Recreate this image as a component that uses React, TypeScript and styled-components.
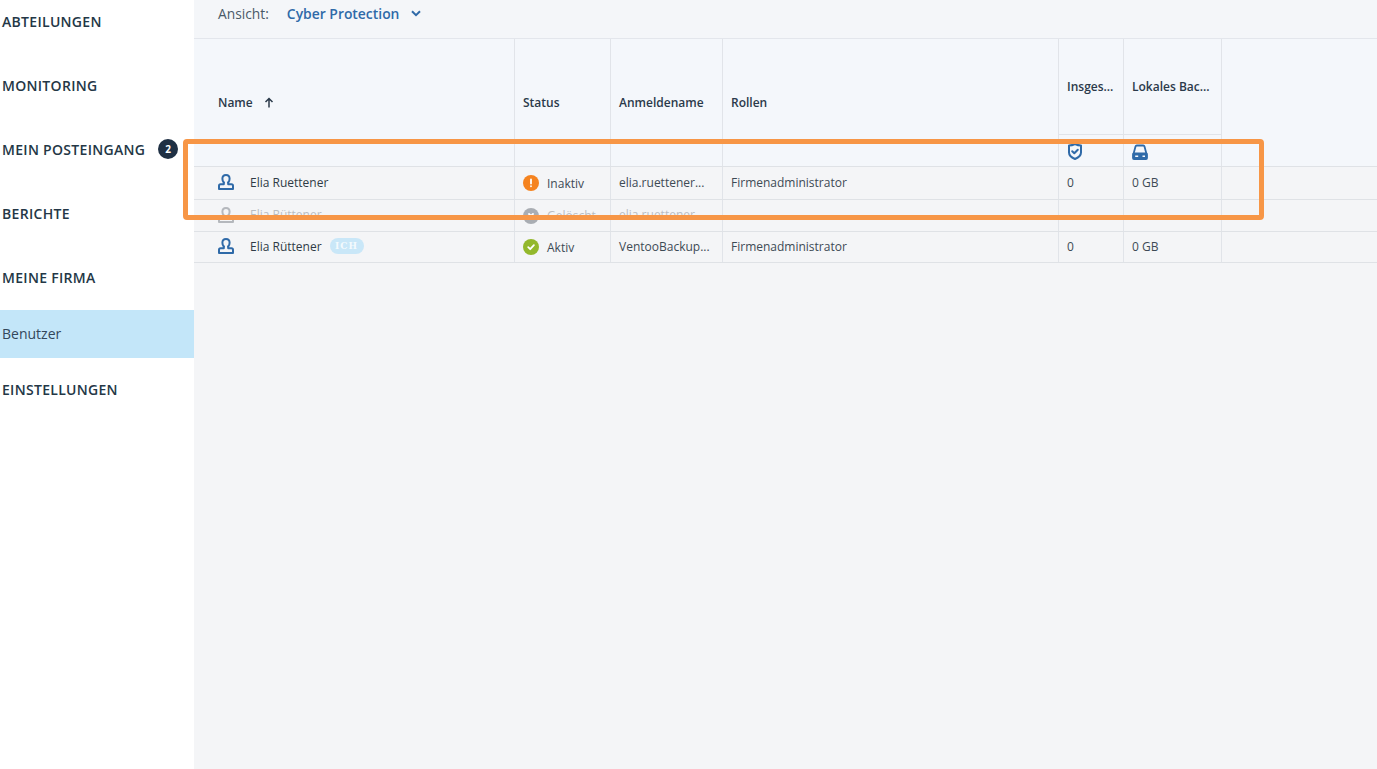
import React from "react";
import styled, { createGlobalStyle } from "styled-components";

const Global = createGlobalStyle`
  html, body { margin: 0; padding: 0; height: 100%; overflow: hidden; background: #f4f5f7; }
  body { font-family: "Open Sans", "Liberation Sans", sans-serif; color: #2b3a4a; }
  #root { height: 100vh; }
`;

const Page = styled.div`
  position: relative;
  display: flex;
  height: 769px;
  overflow: hidden;
`;

const Sidebar = styled.nav`
  width: 194px;
  flex: none;
  background: #fff;
  display: flex;
  flex-direction: column;
  margin-top: -10px;
  height: 779px;
`;

const NavItem = styled.div`
  height: 64px;
  flex: none;
  box-sizing: border-box;
  display: flex;
  align-items: center;
  padding: 0 0 2px 2px;
  font-size: 14px;
  font-weight: 600;
  letter-spacing: 0.3px;
  color: #243746;
`;

const NavSubItem = styled.div`
  height: 48px;
  flex: none;
  box-sizing: border-box;
  display: flex;
  align-items: center;
  padding: 0 0 2px 2px;
  font-size: 14px;
  color: #33475b;
  background: #c3e6f9;
`;

const Count = styled.span`
  width: 20px;
  height: 20px;
  border-radius: 50%;
  background: #1f3044;
  color: #fff;
  font-size: 10px;
  font-weight: 700;
  letter-spacing: 0;
  display: flex;
  align-items: center;
  justify-content: center;
  margin-left: 13px;
`;

const Main = styled.main`
  flex: 1;
  min-width: 0;
  display: flex;
  flex-direction: column;
`;

const TopBar = styled.div`
  height: 34px;
  flex: none;
  box-sizing: content-box;
  border-bottom: 1px solid #e3e6ec;
  background: #f4f6f9;
  display: flex;
  align-items: flex-start;
  padding: 4px 0 0 24px;
  line-height: 19px;
`;

const ViewLabel = styled.span`
  color: #4a5a68;
  font-size: 13.8px;
`;

const ViewValue = styled.span`
  color: #2f6aa8;
  font-weight: 600;
  font-size: 13.9px;
  margin-left: 18px;
`;

const Chevron = styled.svg`
  width: 10px;
  height: 7px;
  margin: 6px 0 0 12px;
`;

const Row = styled.div<{ $height: number; $bg?: string }>`
  display: grid;
  grid-template-columns: 321px 96px 112px 336px 65px 98px 1fr;
  height: ${(p) => p.$height}px;
  box-sizing: border-box;
  background: ${(p) => p.$bg || "#f4f5f7"};
  border-bottom: 1px solid #dfe2e6;
`;

const Cell = styled.div<{ $noBorder?: boolean; $dim?: boolean }>`
  box-sizing: border-box;
  border-right: ${(p) => (p.$noBorder ? "none" : "1px solid #e1e4e9")};
  padding-left: 8px;
  padding-bottom: 2px;
  display: flex;
  align-items: center;
  font-size: 12px;
  min-width: 0;
  white-space: nowrap;
  color: ${(p) => (p.$dim ? "#b9bdc2" : "#3d4a55")};
`;

const NameCell = styled(Cell)`
  padding-left: 24px;
  color: ${(p) => (p.$dim ? "#b9bdc2" : "#2f3b46")};
`;

const HeadName = styled(Cell)`
  padding-left: 24px;
  padding-bottom: 1px;
  font-weight: 600;
  color: #2b3a4a;
`;

const HeadCell = styled(Cell)`
  padding-bottom: 1px;
  font-weight: 600;
  color: #2b3a4a;
`;

const StackCell = styled.div`
  box-sizing: border-box;
  border-right: 1px solid #e1e4e9;
  display: grid;
  grid-template-rows: 96px 1fr;
  min-width: 0;
`;

const StackTitle = styled.div`
  box-sizing: border-box;
  border-bottom: 1px solid #e1e4e9;
  padding: 40px 0 0 8px;
  font-size: 12px;
  line-height: 16px;
  font-weight: 600;
  color: #2b3a4a;
  white-space: nowrap;
`;

const StackIcon = styled.div`
  padding: 8px 0 0 8px;
`;

const SortArrow = styled.svg`
  width: 10px;
  height: 11px;
  margin-left: 11px;
`;

const UserSvg = styled.svg`
  width: 16px;
  height: 16px;
  flex: none;
  margin-right: 16px;
`;

const StatusDot = styled.span<{ $color: string }>`
  width: 16px;
  height: 16px;
  border-radius: 50%;
  background: ${(p) => p.$color};
  display: flex;
  align-items: center;
  justify-content: center;
  flex: none;
  margin-right: 8px;
  color: #fff;
`;

const StatusWrap = styled.span`
  display: flex;
  align-items: center;
  position: relative;
  top: 1px;
`;

const MeBadge = styled.span`
  margin-left: 8px;
  height: 16px;
  width: 34px;
  border-radius: 8px;
  background: #c9e7f8;
  color: #f4fafd;
  font-family: "DejaVu Serif", serif;
  font-size: 9px;
  font-weight: 700;
  letter-spacing: 1.1px;
  display: flex;
  align-items: center;
  justify-content: center;
`;

const Highlight = styled.div`
  position: absolute;
  left: 183px;
  top: 139px;
  width: 1081px;
  height: 81px;
  box-sizing: border-box;
  border: 5px solid #f79646;
  border-radius: 4px;
  pointer-events: none;
`;

const UserIcon = ({ color }: { color: string }) => (
  <UserSvg viewBox="0 0 16 16" fill="none" stroke={color} strokeWidth="2" strokeLinejoin="round" strokeLinecap="round">
    <path d="M5.800 8.600C4.900 7.800 4.400 6.500 4.400 4.800 4.400 2.500 5.900 1 8 1s3.600 1.500 3.600 3.800c0 1.700-.5 3-1.400 3.800" />
    <path d="M5.800 8.600v1.600H2.500c-.9 0-1.500.6-1.500 1.500V15h14v-3.300c0-.9-.6-1.500-1.500-1.500h-3.300V8.600" />
  </UserSvg>
);

const people = [
  { name: "Elia Ruettener", status: "Inaktiv", color: "#f5831f", login: "elia.ruettener...", role: "Firmenadministrator", total: "0", local: "0 GB", glyph: "!" },
  { name: "Elia Rüttener", status: "Gelöscht", color: "#a9adb3", login: "elia.ruettener...", role: "", total: "", local: "", glyph: "x", dim: true, height: 32 },
  { name: "Elia Rüttener", status: "Aktiv", color: "#93b82c", login: "VentooBackup...", role: "Firmenadministrator", total: "0", local: "0 GB", glyph: "v", me: true, height: 31 },
];

const Glyph = ({ kind }: { kind: string }) => (
  <svg width="10" height="10" viewBox="0 0 10 10" fill="none" stroke="currentColor" strokeWidth="1.8" strokeLinecap="round" strokeLinejoin="round">
    {kind === "!" && <path d="M5 1.500v4M5 8.200v.1" />}
    {kind === "x" && <path d="M3 3l4 4M7 3L3 7" />}
    {kind === "v" && <path d="M2.200 5.200L4.200 7.200 7.900 3.200" />}
  </svg>
);

export default function App() {
  return (
    <Page>
      <Global />
      <Sidebar>
        <NavItem>ABTEILUNGEN</NavItem>
        <NavItem>MONITORING</NavItem>
        <NavItem>
          MEIN POSTEINGANG<Count>2</Count>
        </NavItem>
        <NavItem>BERICHTE</NavItem>
        <NavItem>MEINE FIRMA</NavItem>
        <NavSubItem>Benutzer</NavSubItem>
        <NavItem>EINSTELLUNGEN</NavItem>
      </Sidebar>
      <Main>
        <TopBar>
          <ViewLabel>Ansicht:</ViewLabel>
          <ViewValue>Cyber Protection</ViewValue>
          <Chevron viewBox="0 0 10 7" fill="none" stroke="#2f6aa8" strokeWidth="2">
            <path d="M1 1.200l4 4 4-4" />
          </Chevron>
        </TopBar>
        <Row $height={128} $bg="#f4f7fb">
          <HeadName>
            Name
            <SortArrow viewBox="0 0 10 11" fill="none" stroke="#2b3a4a" strokeWidth="1.500">
              <path d="M5 10.500V1.500M1.500 5L5 1.500 8.500 5" />
            </SortArrow>
          </HeadName>
          <HeadCell>Status</HeadCell>
          <HeadCell>Anmeldename</HeadCell>
          <HeadCell>Rollen</HeadCell>
          <StackCell>
            <StackTitle>Insges...</StackTitle>
            <StackIcon>
              <svg width="16" height="18" viewBox="0 0 16 18" fill="none" stroke="#2f6aa8" strokeWidth="2" strokeLinejoin="round" strokeLinecap="round">
                <path d="M2 2.500c2 0 4-.5 6-1.500 2 1 4 1.500 6 1.500v7c0 3-2.500 5-6 6.500-3.500-1.500-6-3.500-6-6.500z" />
                <path d="M5.200 8.200L7.300 10.300 10.800 6.800" />
              </svg>
            </StackIcon>
          </StackCell>
          <StackCell>
            <StackTitle>Lokales Bac...</StackTitle>
            <StackIcon>
              <svg width="16" height="16" viewBox="0 0 16 16" fill="none" stroke="#2f6aa8" strokeWidth="1.800" strokeLinejoin="round">
                <path d="M1.500 10L3.500 2.500c.2-.7.700-1 1.300-1h6.400c.6 0 1.100.3 1.300 1l2 7.500" />
                <rect x="1" y="9.500" width="14" height="5.500" rx="1" fill="#2f6aa8" />
                <path d="M3.200 12.200h3M10.500 12.200h2.500" stroke="#f4f7fb" strokeWidth="1.400" />
              </svg>
            </StackIcon>
          </StackCell>
          <Cell $noBorder />
        </Row>
        {people.map((p, i) => (
          <Row key={i} $height={p.height || 33}>
            <NameCell $dim={p.dim}>
              <UserIcon color={p.dim ? "#b5b8bd" : "#2f6aa8"} />
              {p.name}
              {p.me && <MeBadge>ICH</MeBadge>}
            </NameCell>
            <Cell $dim={p.dim}>
              <StatusWrap>
                <StatusDot $color={p.color}>
                  <Glyph kind={p.glyph} />
                </StatusDot>
                {p.status}
              </StatusWrap>
            </Cell>
            <Cell $dim={p.dim}>{p.login}</Cell>
            <Cell>{p.role}</Cell>
            <Cell>{p.total}</Cell>
            <Cell>{p.local}</Cell>
            <Cell $noBorder />
          </Row>
        ))}
      </Main>
      <Highlight />
    </Page>
  );
}
